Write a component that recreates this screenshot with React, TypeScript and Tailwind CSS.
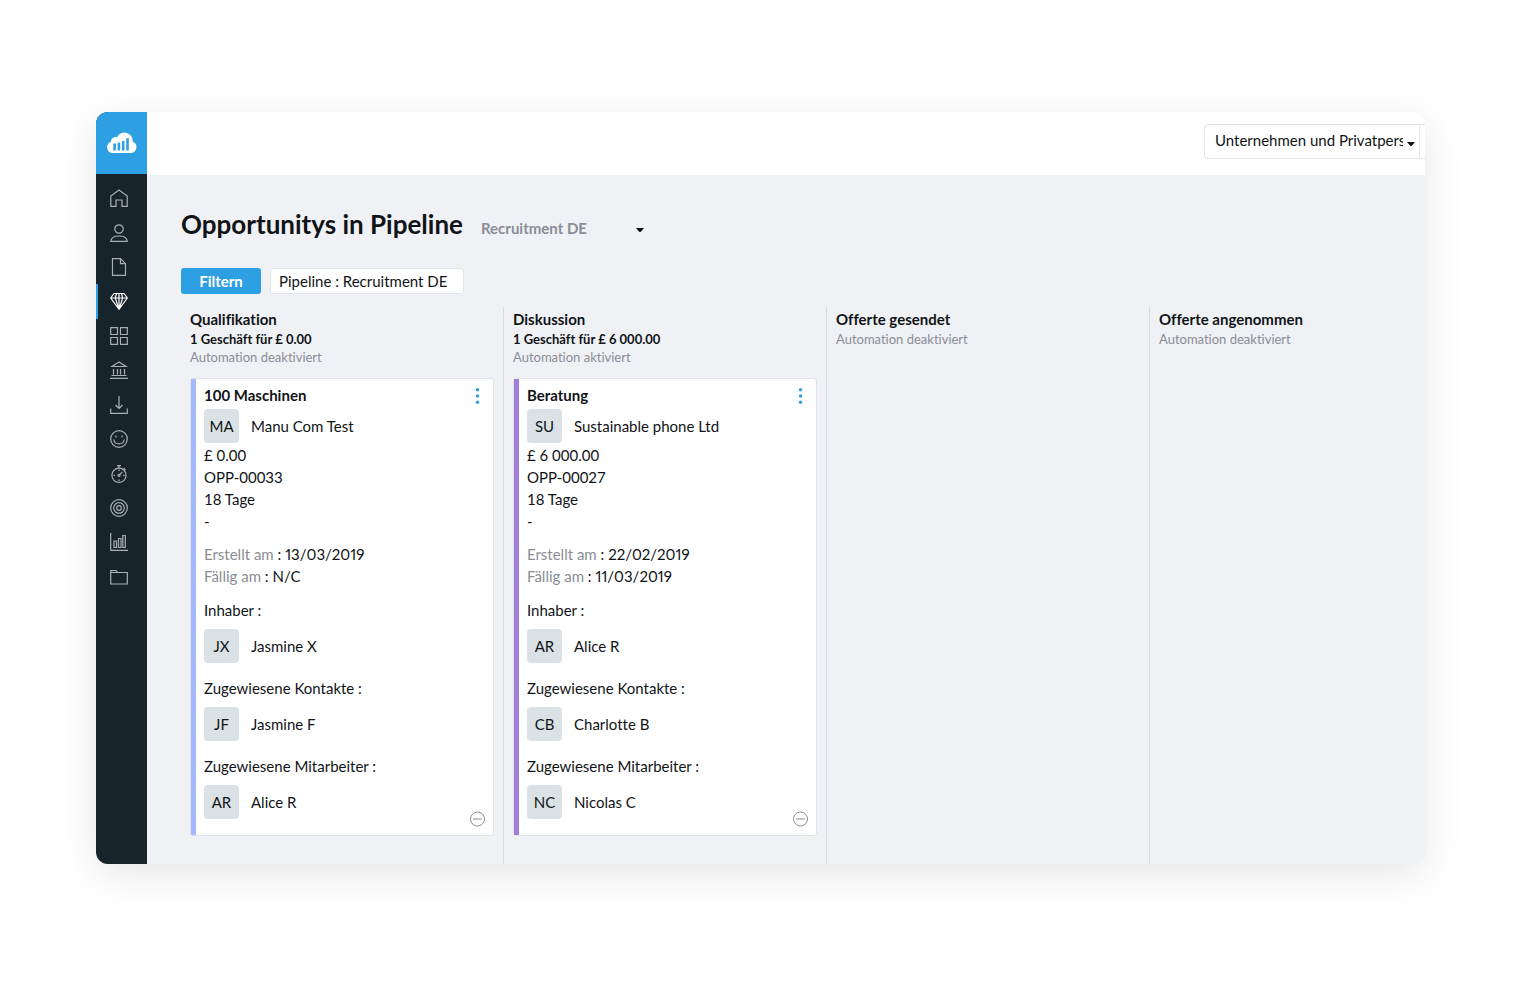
import { useState } from "react";
import type { ReactNode } from "react";

type Person = { initials: string; name: string };

type Deal = {
  title: string;
  accent: string;
  company: Person;
  amount: string;
  reference: string;
  age: string;
  created: string;
  due: string;
  groups: { label: string; person: Person }[];
};

type Stage = {
  name: string;
  summary?: string;
  automation: string;
  deal?: Deal;
};

const stages: Stage[] = [
  {
    name: "Qualifikation",
    summary: "1 Geschäft für £ 0.00",
    automation: "Automation deaktiviert",
    deal: {
      title: "100 Maschinen",
      accent: "bg-[#a3b9fb]",
      company: { initials: "MA", name: "Manu Com Test" },
      amount: "£ 0.00",
      reference: "OPP-00033",
      age: "18 Tage",
      created: "13/03/2019",
      due: "N/C",
      groups: [
        { label: "Inhaber :", person: { initials: "JX", name: "Jasmine X" } },
        { label: "Zugewiesene Kontakte :", person: { initials: "JF", name: "Jasmine F" } },
        { label: "Zugewiesene Mitarbeiter :", person: { initials: "AR", name: "Alice R" } },
      ],
    },
  },
  {
    name: "Diskussion",
    summary: "1 Geschäft für £ 6 000.00",
    automation: "Automation aktiviert",
    deal: {
      title: "Beratung",
      accent: "bg-[#a280d6]",
      company: { initials: "SU", name: "Sustainable phone Ltd" },
      amount: "£ 6 000.00",
      reference: "OPP-00027",
      age: "18 Tage",
      created: "22/02/2019",
      due: "11/03/2019",
      groups: [
        { label: "Inhaber :", person: { initials: "AR", name: "Alice R" } },
        { label: "Zugewiesene Kontakte :", person: { initials: "CB", name: "Charlotte B" } },
        { label: "Zugewiesene Mitarbeiter :", person: { initials: "NC", name: "Nicolas C" } },
      ],
    },
  },
  { name: "Offerte gesendet", automation: "Automation deaktiviert" },
  { name: "Offerte angenommen", automation: "Automation deaktiviert" },
];

const navItems: { label: string; icon: ReactNode }[] = [
  { label: "Startseite", icon: <path d="M.8 17.300V7L9 1 17.200 7v10.300h-5.200v-6.300H6v6.300z" /> },
  {
    label: "Kontakte",
    icon: (
      <>
        <circle cx="9" cy="5" r="4.200" />
        <path d="M.8 17.300c.3-3.600 3-5.300 8.200-5.300s7.900 1.700 8.200 5.300z" />
      </>
    ),
  },
  { label: "Dokumente", icon: <path d="M2.500.700h8l5 5v11.600h-13zM10.500.700v5h5" /> },
  {
    label: "Opportunitys",
    icon: <path d="M4 1.500h10L17.300 6 9 17.300.7 6zM.7 6h16.600M6.500 1.500 5.300 6 9 17.300 12.700 6 11.500 1.500M9 1.500V17" />,
  },
  { label: "Produkte", icon: <path d="M.7.7h6.800v6.800H.7zM10.500.7h6.800v6.800h-6.800zM.7 10.500h6.800v6.800H.7zM10.500 10.500h6.800v6.800h-6.800z" /> },
  {
    label: "Buchhaltung",
    icon: <path d="M9 1 2 5.500h14zM3.500 8v5.500M7.500 8v5.500M10.500 8v5.500M14.500 8v5.500M1.500 14.500h15M0 17.300h18" />,
  },
  { label: "Einkäufe", icon: <path d="M9 0v12.500M5.500 9 9 12.500 12.500 9M.7 12.500v4.800h16.600v-4.800" /> },
  {
    label: "Support",
    icon: (
      <>
        <circle cx="9" cy="9" r="8.300" />
        <path d="M3.700 9.500a5.400 5.400 0 0 0 10.600 0M6 5.500v2M12 5.500v2" />
      </>
    ),
  },
  {
    label: "Zeiterfassung",
    icon: (
      <>
        <circle cx="9" cy="10.300" r="7.100" />
        <circle cx="9" cy="10.300" r="1" />
        <path d="M7 .7h4M9 .6V3M13.500 3l2 2M9.700 9.600l2.800-2.800M9 4.500V6M9 14.500V16M3.500 10.300H5M13 10.300h1.500" />
      </>
    ),
  },
  {
    label: "Ziele",
    icon: (
      <>
        <circle cx="9" cy="9" r="8.300" />
        <circle cx="9" cy="9" r="5.300" />
        <circle cx="9" cy="9" r="2.300" />
      </>
    ),
  },
  {
    label: "Berichte",
    icon: <path d="M.7 0v17.300H18M4 8h2.500v6.500H4zM8.500 5.500H11v9H8.500zM12.800 2.500h2.500v12h-2.500z" />,
  },
  { label: "Dateien", icon: <path d="M.7 2.500h5.300l1.500 2h9.800v11.500H.7zM.7 4.500h6.800" /> },
];

function Logo() {
  return (
    <svg width="30" height="22" viewBox="0 0 30 22" aria-hidden="true">
      <path
        fill="#fff"
        d="M6 21A5.700 5.700 0 0 1 3.800 10 4.900 4.900 0 0 1 10 5.200 8.300 8.300 0 0 1 25.700 9.800 5.800 5.800 0 0 1 24 21z"
      />
      <path fill="#2d9fe3" d="M6.300 11.500h2.600v7H6.300zM10.600 10.800h2.600v7.700h-2.600zM14.900 9h2.600v9.500h-2.600zM19.200 6.300h2.600v12.200h-2.600z" />
    </svg>
  );
}

function Caret() {
  return (
    <svg
      className="pointer-events-none absolute right-[5px] top-1/2 h-1 w-2"
      viewBox="0 0 8 4"
      aria-hidden="true"
    >
      <path d="M0 0h8L5 3.500Q4 4.500 3 3.500z" fill="#111" />
    </svg>
  );
}

function PersonRow({ person }: { person: Person }) {
  return (
    <div className="flex items-center gap-3">
      <span className="flex h-[34px] w-[35px] items-center justify-center rounded bg-[#dae2e5]">
        {person.initials}
      </span>
      <span>{person.name}</span>
    </div>
  );
}

function DealCard({ deal }: { deal: Deal }) {
  return (
    <article className="mt-3 mr-[9px] flex rounded-[3px] border border-[#dde3e8] bg-white text-[15px] leading-[22px]">
      <div className={`w-[5px] shrink-0 ${deal.accent}`} />
      <div className="flex-1 pt-[5px] pb-4 pl-2">
        <h3 className="font-bold">{deal.title}</h3>
        <div className="pt-[3px] pb-px">
          <PersonRow person={deal.company} />
        </div>
        <p>{deal.amount}</p>
        <p>{deal.reference}</p>
        <p>{deal.age}</p>
        <p>-</p>
        <div className="mt-[11px] mb-3 proportional-nums">
          <p>
            <span className="text-[#8a8d96]">Erstellt am</span> : {deal.created}
          </p>
          <p>
            <span className="text-[#8a8d96]">Fällig am</span> : {deal.due}
          </p>
        </div>
        <div className="flex flex-col gap-[14px]">
          {deal.groups.map((group) => (
            <div key={group.label}>
              <p className="mb-2">{group.label}</p>
              <PersonRow person={group.person} />
            </div>
          ))}
        </div>
      </div>
      <div className="flex flex-col items-center justify-between pt-2 pr-2 pb-2">
        <button type="button" aria-label="Aktionen">
          <svg width="16" height="18" viewBox="0 0 16 18" fill="#2d9fe3">
            <circle cx="8.500" cy="2.700" r="1.700" />
            <circle cx="8.500" cy="9" r="1.700" />
            <circle cx="8.500" cy="15.300" r="1.700" />
          </svg>
        </button>
        <button type="button" aria-label="Einklappen">
          <svg width="16" height="16" viewBox="0 0 16 16" fill="none" stroke="#8a8d96">
            <circle cx="8.500" cy="8" r="7" />
            <path d="M4 8h9" />
          </svg>
        </button>
      </div>
    </article>
  );
}

function StageColumn({ stage }: { stage: Stage }) {
  return (
    <section className="w-[323px] shrink-0 border-r border-[#d9dbdf] pt-[2px] pb-7 pl-[9px]">
      <h2 className="text-[15px] leading-[21px] font-bold">{stage.name}</h2>
      {stage.summary && <p className="text-[13px] leading-[18px] font-bold">{stage.summary}</p>}
      <p className="text-[13px] leading-[18px] text-[#8a8d96]">{stage.automation}</p>
      {stage.deal && <DealCard deal={stage.deal} />}
    </section>
  );
}

export default function App() {
  const [active, setActive] = useState("Opportunitys");

  return (
    <div className="min-h-screen bg-white pt-28 pr-[113px] pb-[130px] pl-24 font-[Lato,sans-serif] text-[#111417] [font-feature-settings:'liga'_0]">
      <div className="flex overflow-hidden rounded-xl bg-[#eff1f5] shadow-[0_10px_40px_rgba(0,0,0,0.1)]">
        <aside className="w-[51px] shrink-0 bg-[#17242c]">
          <a href="#" aria-label="Dashboard" className="flex h-[62px] items-center justify-center bg-[#2d9fe3]">
            <Logo />
          </a>
          <nav className="mt-[7px] grid h-[413px] auto-rows-fr">
            {navItems.map((item) => (
              <a
                key={item.label}
                href="#"
                aria-label={item.label}
                onClick={() => setActive(item.label)}
                className={`flex items-center border-l-2 pl-3 ${
                  active === item.label ? "border-[#2d9fe3] text-white" : "border-transparent text-[#a9afb3]"
                }`}
              >
                <svg width="18" height="18" viewBox="0 0 18 18" fill="none" stroke="currentColor" strokeWidth="1.200">
                  {item.icon}
                </svg>
              </a>
            ))}
          </nav>
        </aside>

        <div className="min-w-0 flex-1">
          <header className="flex h-[63px] items-start justify-end bg-white pt-3">
            <div className="relative">
              <select
                aria-label="Suchbereich"
                className="h-[35px] w-[216px] appearance-none rounded-l border border-[#dde3e8] bg-white pr-4 pb-[2px] pl-[10px] text-[15px]"
              >
                <option>Unternehmen und Privatpersonen</option>
              </select>
              <Caret />
            </div>
            <div className="h-[35px] w-[5px] border-y border-[#dde3e8]" />
          </header>

          <main className="pl-[34px]">
            <div className="flex items-baseline gap-[18px] pt-[31px]">
              <h1 className="text-[26px] leading-9 font-bold">Opportunitys in Pipeline</h1>
              <div className="relative">
                <select
                  aria-label="Pipeline"
                  className="w-[168px] appearance-none bg-transparent pr-5 text-[15px] font-bold text-[#8a8d96]"
                >
                  <option>Recruitment DE</option>
                </select>
                <Caret />
              </div>
            </div>

            <div className="mt-[26px] flex gap-[9px] text-[15px]">
              <button type="button" className="h-[26px] w-20 rounded-[3px] bg-[#2d9fe3] font-bold text-white">
                Filtern
              </button>
              <button type="button" className="h-[26px] rounded-[3px] border border-[#e0e5e9] bg-white pr-4 pl-2">
                Pipeline : Recruitment DE
              </button>
            </div>

            <div className="mt-[13px] flex">
              {stages.map((stage) => (
                <StageColumn key={stage.name} stage={stage} />
              ))}
            </div>
          </main>
        </div>
      </div>
    </div>
  );
}
